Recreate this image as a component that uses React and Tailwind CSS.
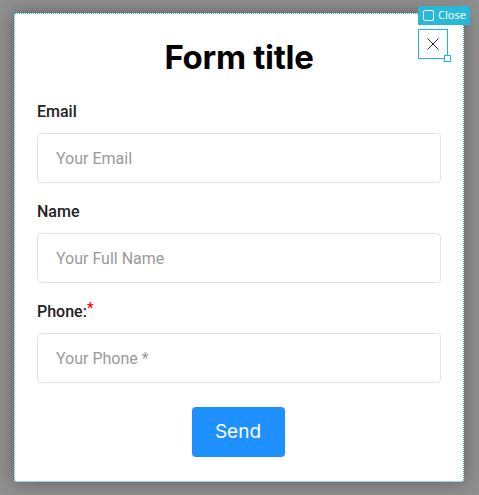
export default function App() {
  return (
    <div className="w-[479px] h-[495px] bg-[#8f8f8f] overflow-hidden pt-[13px] pl-[14px]">
      <div className="relative w-[450px] h-[469px] bg-white border border-dotted border-[#22b5d6] rounded-b-[3px] shadow-[0_0_18px_rgba(0,0,0,0.35)] px-[22px] pt-[24px] pb-[22px] flex flex-col">
        <h1 className="text-center text-[33px] leading-[38px] font-bold text-black font-['Inter',sans-serif] tracking-[-0.3px]">
          Form title
        </h1>
        <div className="mt-[23px] flex flex-col gap-[16px] font-['Roboto',sans-serif]">
          <div className="flex flex-col gap-[10px]">
            <label className="relative top-[1px] text-[16px] leading-[24px] font-medium text-[#222]">Email</label>
            <div className="h-[50px] border border-[#e3e3e3] rounded-[4px] flex items-center px-[18px] pt-[1px] text-[16px] text-[#9a9a9a]">
              Your Email
            </div>
          </div>
          <div className="flex flex-col gap-[10px]">
            <label className="relative top-[1px] text-[16px] leading-[24px] font-medium text-[#222]">Name</label>
            <div className="h-[50px] border border-[#e3e3e3] rounded-[4px] flex items-center px-[18px] pt-[1px] text-[16px] text-[#9a9a9a]">
              Your Full Name
            </div>
          </div>
          <div className="flex flex-col gap-[10px]">
            <label className="relative top-[1px] text-[16px] leading-[24px] font-medium text-[#222] flex items-start">
              <span>Phone:</span>
              <span className="text-[#ff0000] text-[14px] leading-none font-bold mt-[1px]">*</span>
            </label>
            <div className="h-[50px] border border-[#e3e3e3] rounded-[4px] flex items-center px-[18px] pt-[1px] text-[16px] text-[#9a9a9a]">
              Your Phone *
            </div>
          </div>
        </div>
        <div className="mt-[24px] flex justify-center">
          <button className="w-[93px] h-[50px] bg-[#1e90ff] rounded-[4px] text-white text-[19px] font-normal font-['Inter',sans-serif] pt-[1px] translate-x-[-1px]">
            Send
          </button>
        </div>

        <div className="absolute top-[-8px] left-[403px] h-[19px] w-[52px] bg-[#29b8d8] rounded-tl-[3px] flex items-center gap-[4px] pl-[5px] text-white text-[11px] font-['Liberation Sans',sans-serif]">
          <span className="w-[11px] h-[11px] border border-white rounded-[2px]"></span>
          <span>Close</span>
        </div>
        <div className="absolute top-[15px] left-[403px] w-[30px] h-[30px] border border-[#22b5d6] flex items-center justify-center">
          <svg width="12" height="12" viewBox="0 0 12 12">
            <path d="M0.5 0.5 L11.5 11.5 M11.5 0.5 L0.5 11.5" stroke="#222" strokeWidth="1" />
          </svg>
          <span className="absolute right-[-4px] bottom-[-4px] w-[7px] h-[7px] bg-white border border-[#22b5d6]"></span>
        </div>
      </div>
    </div>
  );
}
